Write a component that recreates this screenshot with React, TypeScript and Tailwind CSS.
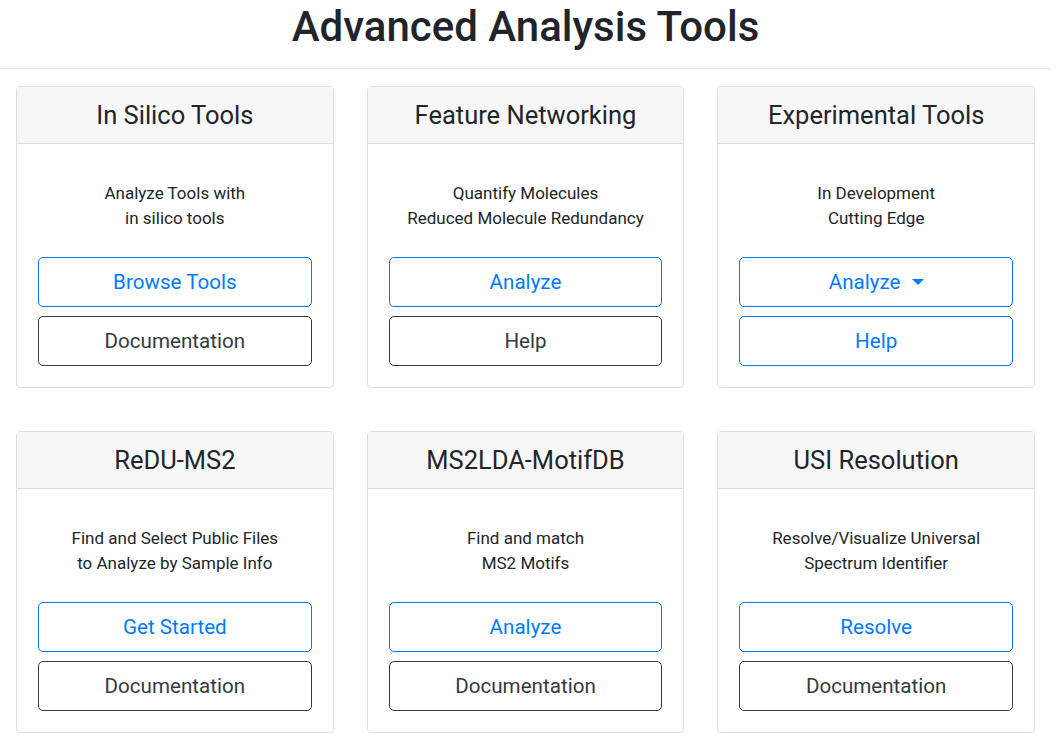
import React from "react";

type Card = {
  title: string;
  lines: [string, string];
  primary: string;
  secondary: string;
  caret?: boolean;
  secondaryBlue?: boolean;
};

const cards: Card[] = [
  { title: "In Silico Tools", lines: ["Analyze Tools with", "in silico tools"], primary: "Browse Tools", secondary: "Documentation" },
  { title: "Feature Networking", lines: ["Quantify Molecules", "Reduced Molecule Redundancy"], primary: "Analyze", secondary: "Help" },
  { title: "Experimental Tools", lines: ["In Development", "Cutting Edge"], primary: "Analyze", secondary: "Help", caret: true, secondaryBlue: true },
  { title: "ReDU-MS2", lines: ["Find and Select Public Files", "to Analyze by Sample Info"], primary: "Get Started", secondary: "Documentation" },
  { title: "MS2LDA-MotifDB", lines: ["Find and match", "MS2 Motifs"], primary: "Analyze", secondary: "Documentation" },
  { title: "USI Resolution", lines: ["Resolve/Visualize Universal", "Spectrum Identifier"], primary: "Resolve", secondary: "Documentation" },
];

function ToolCard({ c }: { c: Card }) {
  return (
    <div className="flex flex-col rounded-[4px] border border-[#dfdfdf] bg-white">
      <div className="flex h-[57px] items-center justify-center border-b border-[#dfdfdf] bg-[#f7f7f7] text-[25.5px] text-[#212529]">
        {c.title}
      </div>
      <div className="flex flex-col px-[21px] pt-[37px] pb-[21px]">
        <p className="text-center text-[17px] leading-[25px] text-[#212529]">
          {c.lines[0]}
          <br />
          {c.lines[1]}
        </p>
        <div className="mt-[26px] flex flex-col gap-[9px]">
          <button className="flex h-[50px] items-center justify-center rounded-[5px] border border-[#007bff] text-[20.6px] text-[#007bff]">
            {c.primary}
            {c.caret && (
              <span className="ml-[11px] inline-block h-0 w-0 border-x-[6px] border-t-[6px] border-x-transparent border-t-[#007bff]" />
            )}
          </button>
          <button
            className={
              c.secondaryBlue
                ? "flex h-[50px] items-center justify-center rounded-[5px] border border-[#007bff] text-[20.6px] text-[#007bff]"
                : "flex h-[50px] items-center justify-center rounded-[5px] border border-[#343a40] text-[20.6px] text-[#343a40]"
            }
          >
            {c.secondary}
          </button>
        </div>
      </div>
    </div>
  );
}

export default function App() {
  return (
    <div className="min-h-[734px] w-[1051px] bg-white" style={{ fontFamily: "Roboto, 'Liberation Sans', sans-serif" }}>
      <h1 className="pt-[2px] text-center text-[42px] font-medium leading-[50px] text-[#212529]">
        Advanced Analysis Tools
      </h1>
      <div className="mt-[16px] border-t border-[#e5e5e5]" />
      <div className="mt-[17px] grid grid-cols-3 gap-x-[33px] gap-y-[43px] px-[16px]">
        {cards.map((c) => (
          <ToolCard key={c.title} c={c} />
        ))}
      </div>
    </div>
  );
}
